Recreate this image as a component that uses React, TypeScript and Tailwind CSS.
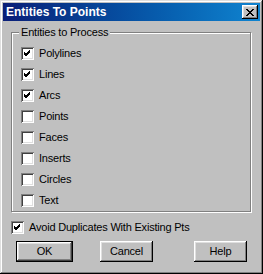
import React from "react";

const items = [
  { label: "Polylines", checked: true },
  { label: "Lines", checked: true },
  { label: "Arcs", checked: true },
  { label: "Points", checked: false },
  { label: "Faces", checked: false },
  { label: "Inserts", checked: false },
  { label: "Circles", checked: false },
  { label: "Text", checked: false },
];

function CheckBox({ checked }: { checked: boolean }) {
  return (
    <span className="flex h-[13px] w-[13px] shrink-0 items-center justify-center bg-white shadow-[inset_1px_1px_0_#808080,inset_-1px_-1px_0_#ffffff,inset_2px_2px_0_#404040,inset_-2px_-2px_0_#dfdfdf]">
      {checked && (
        <svg width="13" height="13" viewBox="0 0 13 13">
          <path d="M3 6l2 2 4-4M3 7l2 2 4-4M3 5l2 2 4-4" stroke="#000" strokeWidth="1" fill="none" shapeRendering="crispEdges" />
        </svg>
      )}
    </span>
  );
}

function Button({ label, isDefault, width }: { label: string; isDefault?: boolean; width: string }) {
  return (
    <button
      type="button"
      className={`flex h-[21px] ${width} items-center justify-center bg-[#c0c0c0] text-[11px] tracking-[-0.2px] text-black ${
        isDefault
          ? "border border-black shadow-[inset_-1px_-1px_0_#404040,inset_1px_1px_0_#ffffff,inset_-2px_-2px_0_#808080,inset_2px_2px_0_#dfdfdf]"
          : "shadow-[inset_-1px_-1px_0_#000000,inset_1px_1px_0_#ffffff,inset_-2px_-2px_0_#808080,inset_2px_2px_0_#dfdfdf]"
      }`}
    >
      {label}
    </button>
  );
}

export default function App() {
  return (
    <div
      className="flex h-[274px] w-[263px] flex-col bg-[#c0c0c0] p-[3px] text-black shadow-[inset_-1px_-1px_0_#000000,inset_1px_1px_0_#dfdfdf,inset_-2px_-2px_0_#808080,inset_2px_2px_0_#ffffff]"
      style={{ fontFamily: '"Liberation Sans", Arial, sans-serif' }}
    >
      <div className="flex h-[18px] items-center justify-between bg-gradient-to-r from-[#0a1e78] to-[#1084d0] pl-[3px] pr-[2px]">
        <span className="text-[12px] font-bold leading-none text-white">Entities To Points</span>
        <span className="flex h-[14px] w-[16px] items-center justify-center bg-[#c0c0c0] shadow-[inset_-1px_-1px_0_#000000,inset_1px_1px_0_#ffffff,inset_-2px_-2px_0_#808080,inset_2px_2px_0_#dfdfdf]">
          <svg width="8" height="7" viewBox="0 0 8 7" shapeRendering="crispEdges">
            <path d="M0 0h2v1h-2zM6 0h2v1h-2zM1 1h2v1h-2zM5 1h2v1h-2zM2 2h4v1h-4zM3 3h2v1h-2zM2 4h4v1h-4zM1 5h2v1h-2zM5 5h2v1h-2zM0 6h2v1h-2zM6 6h2v1h-2z" fill="#000" />
          </svg>
        </span>
      </div>

      <div className="relative ml-[8px] mt-[11px] h-[180px] w-[240px] border border-[#808080] shadow-[1px_1px_0_#ffffff,inset_1px_1px_0_#ffffff]">
        <span className="absolute left-[7px] top-[-7px] bg-[#c0c0c0] px-[2px] text-[11px] leading-[13px] tracking-[-0.2px]">
          Entities to Process
        </span>
        <div className="ml-[9px] mt-[14px] flex flex-col gap-[8px]">
          {items.map((it) => (
            <div key={it.label} className="flex h-[13px] items-center gap-[5px]">
              <CheckBox checked={it.checked} />
              <span className="text-[11px] leading-none tracking-[-0.2px]">{it.label}</span>
            </div>
          ))}
        </div>
      </div>

      <div className="ml-[8px] mt-[9px] flex h-[13px] items-center gap-[5px]">
        <CheckBox checked />
        <span className="text-[11px] leading-none tracking-[-0.2px]">Avoid Duplicates With Existing Pts</span>
      </div>

      <div className="ml-[13px] mt-[7px] flex items-center">
        <Button label="OK" isDefault width="w-[57px]" />
        <div className="w-[27px]" />
        <Button label="Cancel" width="w-[53px]" />
        <div className="w-[41px]" />
        <Button label="Help" width="w-[53px]" />
      </div>
    </div>
  );
}
